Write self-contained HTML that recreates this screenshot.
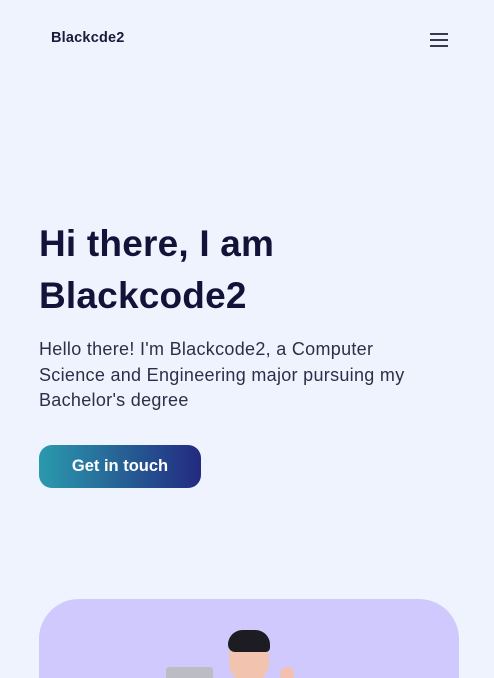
<!DOCTYPE html>
<html style="width:494px;height:678px;overflow:hidden"><head><style>
*{margin:0;padding:0;box-sizing:border-box}
body{width:494px;height:678px;overflow:hidden;background:#eff3fe;font-family:"Liberation Sans",sans-serif;position:relative;color:#13133a}
.logo{position:absolute;left:51px;top:30px;font-weight:bold;font-size:14.5px;color:#1a1a3a;letter-spacing:0.2px}
.menu{position:absolute;left:430px;top:33px;width:18px}
.menu i{display:block;height:2px;background:#3a3a4e;margin-bottom:4px}
h1{position:absolute;left:39px;top:218px;font-size:37px;line-height:52px;font-weight:bold;color:#13133a;letter-spacing:0.2px}
p{position:absolute;left:39px;top:337px;width:395px;font-size:18px;line-height:25.5px;color:#2e2e48;letter-spacing:0.3px}
.btn{position:absolute;left:39px;top:445px;width:162px;height:43px;border-radius:13px;background:linear-gradient(90deg,#2a9aad,#232a80);color:#fff;font-weight:bold;font-size:16.5px;text-align:center;line-height:43px}
.card{position:absolute;left:39px;top:599px;width:420px;height:79px;border-radius:40px 40px 0 0;background:#cfc9fd;overflow:hidden}
</style></head><body>
<div class="logo">Blackcde2</div>
<div class="menu"><i></i><i></i><i></i></div>
<h1>Hi there, I am<br>Blackcode2</h1>
<p>Hello there! I'm Blackcode2, a Computer Science and Engineering major pursuing my Bachelor's degree</p>
<div class="btn">Get in touch</div>
<div class="card">
<div style="position:absolute;left:127px;top:68px;width:47px;height:20px;background:#bcbcc4;border-radius:3px"></div>
<div style="position:absolute;left:190px;top:36px;width:40px;height:48px;background:#f2c4b0;border-radius:18px 18px 20px 20px"></div>
<div style="position:absolute;left:189px;top:31px;width:42px;height:22px;background:#1c1c22;border-radius:20px 20px 6px 10px"></div>
<div style="position:absolute;left:241px;top:68px;width:14px;height:14px;background:#f4c0b0;border-radius:6px"></div>
</div>
</body></html>
